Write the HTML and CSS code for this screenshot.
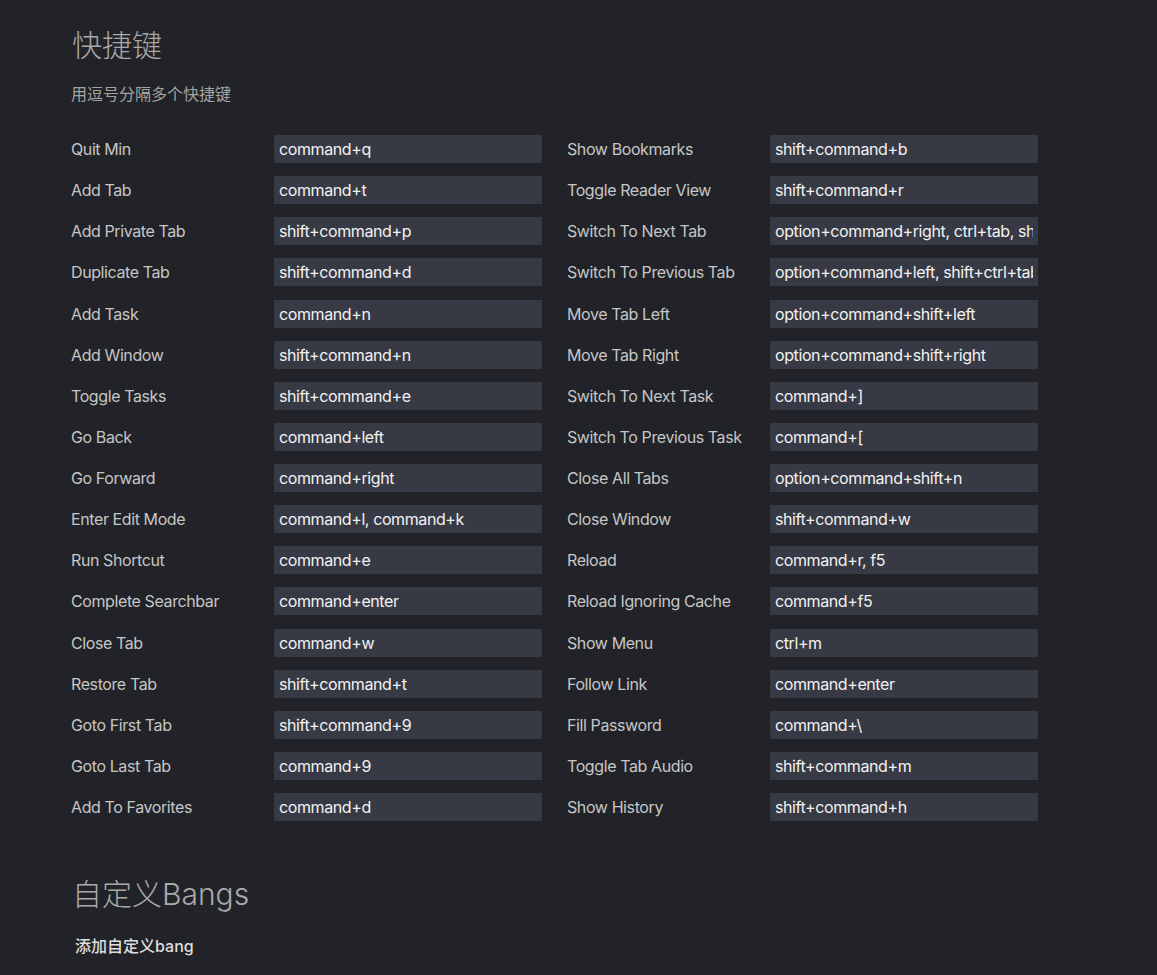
FILE: index.html
```html
<!DOCTYPE html>
<html lang="zh">
<head>
<meta charset="utf-8">
<title>快捷键</title>
<link rel="stylesheet" href="styles.css">
</head>
<body>
<div class="page">
  <h1 class="section-title">快捷键</h1>
  <p class="hint">用逗号分隔多个快捷键</p>
  <div class="columns">
    <div class="col">
      <div class="row"><span class="label">Quit Min</span><input class="key" value="command+q"></div>
      <div class="row"><span class="label">Add Tab</span><input class="key" value="command+t"></div>
      <div class="row"><span class="label">Add Private Tab</span><input class="key" value="shift+command+p"></div>
      <div class="row"><span class="label">Duplicate Tab</span><input class="key" value="shift+command+d"></div>
      <div class="row"><span class="label">Add Task</span><input class="key" value="command+n"></div>
      <div class="row"><span class="label">Add Window</span><input class="key" value="shift+command+n"></div>
      <div class="row"><span class="label">Toggle Tasks</span><input class="key" value="shift+command+e"></div>
      <div class="row"><span class="label">Go Back</span><input class="key" value="command+left"></div>
      <div class="row"><span class="label">Go Forward</span><input class="key" value="command+right"></div>
      <div class="row"><span class="label">Enter Edit Mode</span><input class="key" value="command+l, command+k"></div>
      <div class="row"><span class="label">Run Shortcut</span><input class="key" value="command+e"></div>
      <div class="row"><span class="label">Complete Searchbar</span><input class="key" value="command+enter"></div>
      <div class="row"><span class="label">Close Tab</span><input class="key" value="command+w"></div>
      <div class="row"><span class="label">Restore Tab</span><input class="key" value="shift+command+t"></div>
      <div class="row"><span class="label">Goto First Tab</span><input class="key" value="shift+command+9"></div>
      <div class="row"><span class="label">Goto Last Tab</span><input class="key" value="command+9"></div>
      <div class="row"><span class="label">Add To Favorites</span><input class="key" value="command+d"></div>
    </div>
    <div class="col">
      <div class="row"><span class="label">Show Bookmarks</span><input class="key" value="shift+command+b"></div>
      <div class="row"><span class="label">Toggle Reader View</span><input class="key" value="shift+command+r"></div>
      <div class="row"><span class="label">Switch To Next Tab</span><input class="key" value="option+command+right, ctrl+tab, shift+command+]"></div>
      <div class="row"><span class="label">Switch To Previous Tab</span><input class="key" value="option+command+left, shift+ctrl+tab, shift+command+["></div>
      <div class="row"><span class="label">Move Tab Left</span><input class="key" value="option+command+shift+left"></div>
      <div class="row"><span class="label">Move Tab Right</span><input class="key" value="option+command+shift+right"></div>
      <div class="row"><span class="label">Switch To Next Task</span><input class="key" value="command+]"></div>
      <div class="row"><span class="label">Switch To Previous Task</span><input class="key" value="command+["></div>
      <div class="row"><span class="label">Close All Tabs</span><input class="key" value="option+command+shift+n"></div>
      <div class="row"><span class="label">Close Window</span><input class="key" value="shift+command+w"></div>
      <div class="row"><span class="label">Reload</span><input class="key" value="command+r, f5"></div>
      <div class="row"><span class="label">Reload Ignoring Cache</span><input class="key" value="command+f5"></div>
      <div class="row"><span class="label">Show Menu</span><input class="key" value="ctrl+m"></div>
      <div class="row"><span class="label">Follow Link</span><input class="key" value="command+enter"></div>
      <div class="row"><span class="label">Fill Password</span><input class="key" value="command+\"></div>
      <div class="row"><span class="label">Toggle Tab Audio</span><input class="key" value="shift+command+m"></div>
      <div class="row"><span class="label">Show History</span><input class="key" value="shift+command+h"></div>
    </div>
  </div>
  <h1 class="section-title bangs">自定义Bangs</h1>
  <p class="add-bang">添加自定义bang</p>
</div>
</body>
</html>
```

FILE: styles.css
```css
html, body {
  margin: 0;
  padding: 0;
  background: #212328;
}
body {
  font-family: Inter, "Noto Sans CJK SC", sans-serif;
  color: #c6c6c6;
}
.page {
  padding: 23px 0 0 71px;
}
.section-title {
  margin: 0 0 0 1px;
  font-family: Inter, "Noto Sans CJK SC", sans-serif;
  font-size: 30px;
  font-weight: 300;
  line-height: 44px;
  color: #a9a9a9;
}
.hint {
  margin: 16px 0 0;
  font-size: 16px;
  line-height: 22px;
  color: #a3a3a3;
}
.columns {
  display: flex;
  gap: 25px;
  margin-top: 30px;
}
.col {
  display: flex;
  flex-direction: column;
  gap: 13.125px;
}
.row {
  display: flex;
  align-items: center;
  height: 28px;
}
.label {
  width: 203px;
  font-size: 16px;
  letter-spacing: -0.4px;
  color: #c6c6c6;
  white-space: nowrap;
}
.key {
  box-sizing: border-box;
  width: 268px;
  height: 28px;
  margin: 0;
  padding: 0 5px;
  border: none;
  outline: none;
  background: #373a45;
  color: #f2f2f2;
  font-family: Inter, "Noto Sans CJK SC", sans-serif;
  font-size: 16px;
  letter-spacing: -0.4px;
}
.bangs {
  margin-top: 51px;
  margin-left: 1px;
}
.add-bang {
  margin: 19px 0 0 4px;
  font-size: 16px;
  font-weight: 500;
  line-height: 22px;
  color: #dedede;
}
```
